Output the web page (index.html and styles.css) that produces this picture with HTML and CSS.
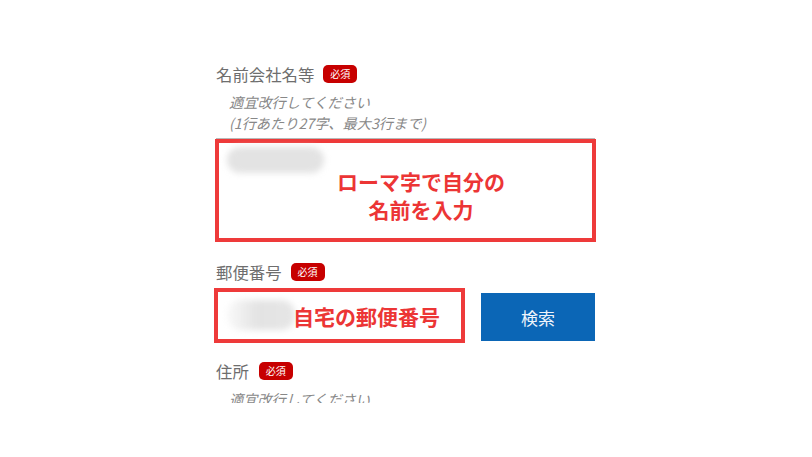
FILE: index.html
```html
<!DOCTYPE html>
<html lang="ja">
<head>
<meta charset="utf-8">
<link rel="stylesheet" href="styles.css">
</head>
<body>
<div class="clip">
  <form class="form">
    <div class="label-row">
      <span class="label">名前会社名等</span>
      <span class="badge">必須</span>
    </div>
    <p class="hint">適宜改行してください<br>(1行あたり27字、最大3行まで)</p>
    <div class="name-box">
      <span class="blur blur-name"></span>
      <p class="note note-name">ローマ字で自分の<br>名前を入力</p>
    </div>

    <div class="label-row label-zip">
      <span class="label">郵便番号</span>
      <span class="badge">必須</span>
    </div>
    <div class="zip-row">
      <div class="zip-box">
        <span class="blur blur-zip"></span>
        <p class="note note-zip">自宅の郵便番号</p>
      </div>
      <button type="button" class="search">検索</button>
    </div>

    <div class="label-row label-addr">
      <span class="label">住所</span>
      <span class="badge">必須</span>
    </div>
    <p class="hint hint-addr">適宜改行してください</p>
  </form>
</div>
</body>
</html>
```

FILE: styles.css
```css
* { box-sizing: border-box; }
html, body {
  margin: 0;
  padding: 0;
  background: #ffffff;
  font-family: "Noto Sans CJK JP", "Noto Sans", sans-serif;
}
.clip {
  height: 403px;
  overflow: hidden;
}
.form {
  width: 382px;
  margin: 0 auto;
  padding-top: 62px;
  padding-left: 1px;
}
.label-row {
  display: flex;
  align-items: center;
  height: 24px;
  gap: 9px;
}
.label {
  font-size: 16.4px;
  line-height: 24px;
  color: #6e6e6e;
}
.badge {
  display: inline-block;
  height: 18px;
  line-height: 18px;
  padding: 0 7px;
  font-size: 10px;
  color: #ffffff;
  background: #c70000;
  border-radius: 5px;
}
.hint {
  margin: 6px 0 0 13px;
  font-size: 14.2px;
  line-height: 21px;
  font-style: italic;
  color: #888888;
}
.name-box {
  position: relative;
  margin-top: 5px;
  margin-left: -1px;
  width: 381px;
  height: 103px;
  border: 4px solid #ee3a3a;
  box-shadow: 0 -2px 0 -1px #b9b9b9;
  background: #fff;
}
.blur {
  position: absolute;
  border-radius: 14px;
  background: #e3e3e3;
  filter: blur(3px);
}
.blur-name {
  left: 8px;
  top: 4px;
  width: 97px;
  height: 26px;
}
.note {
  position: absolute;
  margin: 0;
  color: #ec3535;
  font-weight: 700;
  font-size: 21px;
  line-height: 28px;
  text-align: center;
  white-space: nowrap;
}
.note-name {
  left: 114px;
  top: 24px;
  width: 176px;
}
.label-zip { margin-top: 18px; }
.zip-row {
  display: flex;
  align-items: flex-start;
  margin-top: 4px;
  margin-left: -2px;
  gap: 16px;
}
.zip-box {
  position: relative;
  width: 251px;
  height: 55px;
  border: 4px solid #ee3a3a;
  background: #fff;
}
.blur-zip {
  left: 9px;
  top: 8px;
  width: 68px;
  height: 30px;
  background: linear-gradient(to right, rgba(227,227,227,0.2), #e3e3e3 45%, #e6e6e6);
}
.note-zip {
  left: 75px;
  top: 10px;
}
.search {
  margin-top: 5px;
  width: 114px;
  height: 48px;
  border: 0;
  border-radius: 0;
  background: #0b66b6;
  color: #eef4fb;
  font-family: "Noto Sans CJK JP", "Noto Sans", sans-serif;
  font-size: 17px;
  padding: 0;
}
.label-addr { margin-top: 16px; gap: 10px; }
.hint-addr { margin-top: 6px; }
```
